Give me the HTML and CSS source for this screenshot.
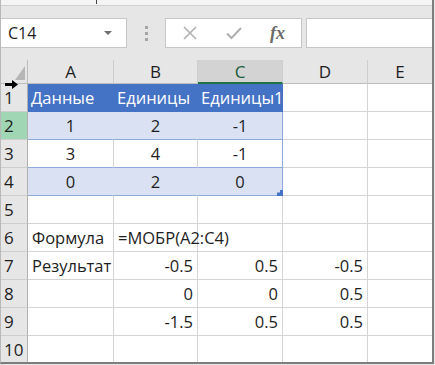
FILE: index.html
```html
<!DOCTYPE html>
<html lang="ru">
<head>
    <meta charset="UTF-8">
    <title>МОБР</title>
    <link rel="stylesheet" href="styles.css">
</head>
<body>
<div class="app">
    <div class="ribbon-edge"><span class="tick"></span></div>
    <div class="formula-bar">
        <div class="name-box">
            <span>C14</span>
            <svg class="caret" width="8" height="5" viewBox="0 0 8 5"><path d="M0 0h8L4 4z" fill="#6e6e6e"/></svg>
        </div>
        <div class="grip"><i></i><i></i><i></i></div>
        <div class="fx-buttons">
            <svg width="16" height="16" viewBox="0 0 16 16"><path d="M2 2l12 12M14 2L2 14" stroke="#b0b0b0" stroke-width="1.6" fill="none"/></svg>
            <svg width="18" height="16" viewBox="0 0 18 16"><path d="M2 8.5l4.5 4.5L16 3" stroke="#b0b0b0" stroke-width="2" fill="none"/></svg>
            <span class="fx">fx</span>
        </div>
        <div class="formula-input"></div>
    </div>

    <div class="sheet">
        <div class="corner"><span class="tri"></span></div>
        <div class="col-h">A</div>
        <div class="col-h">B</div>
        <div class="col-h active">C</div>
        <div class="col-h">D</div>
        <div class="col-h last">E</div>

        <div class="row-h">1</div>
        <div class="c th">Данные</div>
        <div class="c th">Единицы</div>
        <div class="c th edge">Единицы1</div>
        <div class="c"></div>
        <div class="c last"></div>

        <div class="row-h sel">2</div>
        <div class="c band mid">1</div>
        <div class="c band mid">2</div>
        <div class="c band mid edge">-1</div>
        <div class="c"></div>
        <div class="c last"></div>

        <div class="row-h">3</div>
        <div class="c plain mid">3</div>
        <div class="c plain mid">4</div>
        <div class="c plain mid edge">-1</div>
        <div class="c"></div>
        <div class="c last"></div>

        <div class="row-h">4</div>
        <div class="c band mid">0</div>
        <div class="c band mid">2</div>
        <div class="c band mid edge">0<span class="handle"></span></div>
        <div class="c"></div>
        <div class="c last"></div>

        <div class="row-h">5</div>
        <div class="c"></div><div class="c"></div><div class="c"></div><div class="c"></div><div class="c last"></div>

        <div class="row-h">6</div>
        <div class="c">Формула</div>
        <div class="c spill">=МОБР(A2:C4)</div>
        <div class="c"></div><div class="c"></div><div class="c last"></div>

        <div class="row-h">7</div>
        <div class="c">Результат</div>
        <div class="c num">-0.5</div>
        <div class="c num">0.5</div>
        <div class="c num">-0.5</div>
        <div class="c last"></div>

        <div class="row-h">8</div>
        <div class="c"></div>
        <div class="c num">0</div>
        <div class="c num">0</div>
        <div class="c num">0.5</div>
        <div class="c last"></div>

        <div class="row-h">9</div>
        <div class="c"></div>
        <div class="c num">-1.5</div>
        <div class="c num">0.5</div>
        <div class="c num">0.5</div>
        <div class="c last"></div>

        <div class="row-h">10</div>
        <div class="c"></div><div class="c"></div><div class="c"></div><div class="c"></div><div class="c last"></div>
    </div>

    <svg class="arrow" width="14" height="9" viewBox="0 0 14 9"><path d="M0 3h7V0l6 4.5L7 9V6H0z" fill="#000"/></svg>
</div>
</body>
</html>
```

FILE: styles.css
```css
body {
    margin: 0;
    width: 435px;
    height: 365px;
    overflow: hidden;
    background: #e6e6e6;
    font-family: "Open Sans", "Noto Sans", sans-serif;
    color: #1e1e1e;
}

.app {
    position: relative;
    width: 431px;
    height: 362px;
    border-right: 2px solid #7d7d7d;
    border-bottom: 2px solid #7d7d7d;
    border-left: 1px solid #b9b9b9;
    background: #e6e6e6;
    overflow: hidden;
}

.ribbon-edge {
    height: 5px;
    background: #f4f4f4;
    border-bottom: 1px solid #cfcfcf;
    position: relative;
}

.tick {
    position: absolute;
    left: 95px;
    top: 0;
    width: 1px;
    height: 4px;
    background: #444;
}

.formula-bar {
    display: flex;
    align-items: center;
    height: 30px;
    padding: 12px 0 12px 0;
}

.name-box {
    box-sizing: border-box;
    width: 126px;
    height: 30px;
    background: #fff;
    border: 1px solid #c6c6c6;
    border-left: none;
    display: flex;
    align-items: center;
    justify-content: space-between;
    padding: 0 14px 0 7px;
    font-size: 16px;
}

.caret {
    margin-top: 1px;
}

.grip {
    width: 38px;
    display: flex;
    flex-direction: column;
    align-items: center;
    gap: 3px;
}

.grip i {
    width: 3px;
    height: 3px;
    background: #a6a6a6;
}

.fx-buttons {
    box-sizing: border-box;
    width: 137px;
    height: 30px;
    background: #fff;
    border: 1px solid #c6c6c6;
    display: flex;
    align-items: center;
    justify-content: space-between;
    padding: 0 16px 0 16px;
}

.fx {
    font-family: "Liberation Serif", serif;
    font-style: italic;
    font-weight: bold;
    font-size: 18px;
    color: #6b6b6b;
}

.formula-input {
    flex: 1;
    box-sizing: border-box;
    height: 30px;
    margin-left: 4px;
    background: #fff;
    border: 1px solid #c6c6c6;
    border-right: none;
}

.sheet {
    display: grid;
    grid-template-columns: 27px 86px 84px 85px 85px 64px;
    grid-template-rows: 24px;
    grid-auto-rows: 28px;
    background: #fff;
    font-size: 16.5px;
}

.corner {
    position: relative;
    background: #e6e6e6;
    border-right: 1px solid #bdbdbd;
    border-bottom: 1px solid #bdbdbd;
}

.tri {
    position: absolute;
    right: 2px;
    bottom: 3px;
    width: 0;
    height: 0;
    border-left: 10px solid transparent;
    border-bottom: 14px solid #b6b6b6;
}

.col-h {
    background: #e6e6e6;
    border-right: 1px solid #cdcdcd;
    border-bottom: 1px solid #bdbdbd;
    display: flex;
    align-items: center;
    justify-content: center;
    font-size: 17px;
}

.col-h.active {
    background: #d3d3d3;
    border-bottom: 2px solid #217346;
    color: #1d5a3a;
}

.col-h.last,
.c.last {
    border-right: none;
}

.row-h {
    background: #e6e6e6;
    border-right: 1px solid #b0b0b0;
    border-bottom: 1px solid #cdcdcd;
    display: flex;
    align-items: center;
    padding-left: 3px;
    font-size: 17px;
}

.row-h.sel {
    background: #a0d6b4;
}

.c {
    border-right: 1px solid #d4d4d4;
    border-bottom: 1px solid #d4d4d4;
    display: flex;
    align-items: center;
    padding: 0 4px;
    white-space: nowrap;
    position: relative;
}

.c.th {
    background: #4472c4;
    color: #fff;
    border-right-color: #4472c4;
    border-bottom-color: #4472c4;
    padding: 0 3px;
}

.c.band {
    background: #d9e1f2;
    border-right-color: #d9e1f2;
    border-bottom-color: #8ea9db;
}

.c.plain {
    border-bottom-color: #8ea9db;
}

.c.edge {
    border-right-color: #8ea9db;
}

.c.th.edge {
    border-right-color: #4472c4;
}

.c.mid {
    justify-content: center;
}

.c.num {
    justify-content: flex-end;
}

.c.spill {
    overflow: visible;
    z-index: 1;
}

.handle {
    position: absolute;
    right: -1px;
    bottom: -1px;
    width: 6px;
    height: 6px;
    background: #4472c4;
    clip-path: polygon(0 40%, 50% 40%, 50% 0, 100% 0, 100% 100%, 0 100%);
}

.arrow {
    position: absolute;
    left: 4px;
    top: 80px;
}
```
